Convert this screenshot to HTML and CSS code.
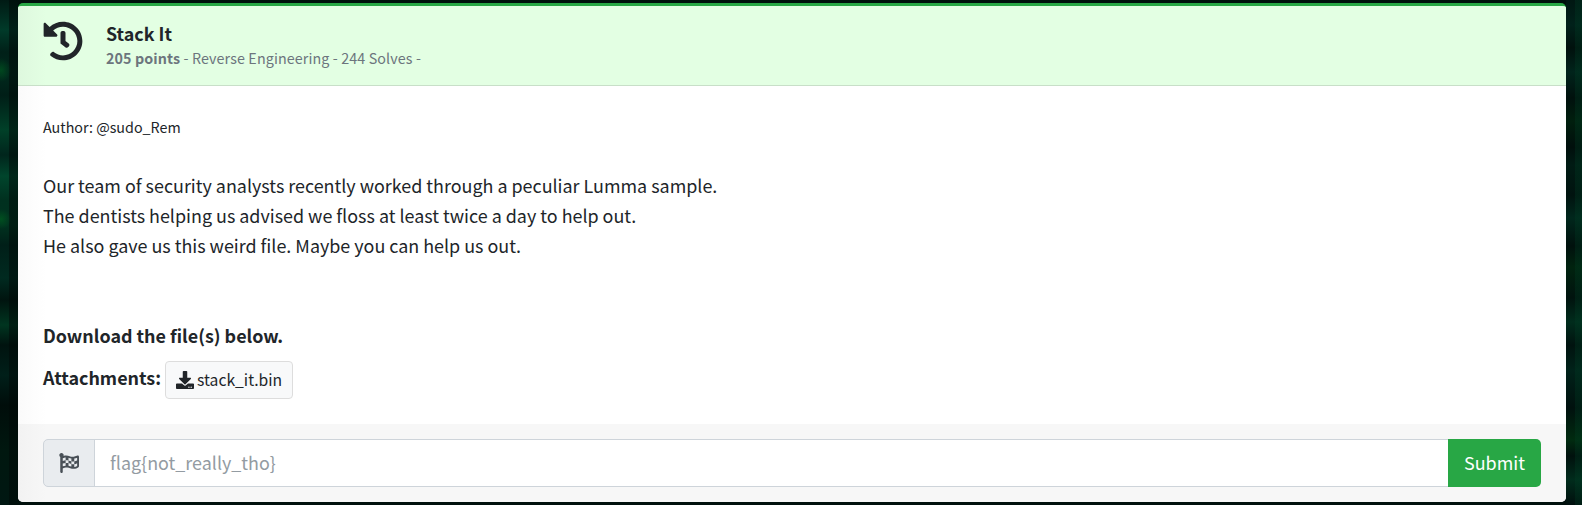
FILE: index.html
```
<!DOCTYPE html>
<html lang="en">
<head>
<meta charset="utf-8">
<title>Stack It</title>
<link rel="stylesheet" href="styles.css">
</head>
<body>
<article class="card">
  <header class="card-header">
    <svg class="history-icon" viewBox="0 0 512 512" aria-hidden="true"><path d="M504 255.531c.253 136.64-111.18 248.372-247.82 248.468-59.015.042-113.223-20.53-155.822-54.911-11.077-8.94-11.905-25.541-1.839-35.607l11.267-11.267c8.609-8.609 22.353-9.551 31.891-1.984C173.062 425.135 212.781 440 256 440c101.705 0 184-82.311 184-184 0-101.705-82.311-184-184-184-48.814 0-93.149 18.969-126.068 49.932l50.754 50.754c10.08 10.08 2.941 27.314-11.313 27.314H24c-8.837 0-16-7.163-16-16V38.627c0-14.254 17.234-21.393 27.314-11.314l49.372 49.372C129.209 34.136 189.552 8 256 8c136.81 0 247.747 110.78 248 247.531zm-180.912 78.784l9.823-12.63c8.138-10.463 6.253-25.542-4.21-33.679L288 256.349V152c0-13.255-10.745-24-24-24h-16c-13.255 0-24 10.745-24 24v135.651l65.409 50.874c10.463 8.137 25.541 6.253 33.679-4.21z"/></svg>
    <div class="heading">
      <h1 class="title">Stack It</h1>
      <p class="meta"><b>205 points</b> - Reverse Engineering - 244 Solves -</p>
    </div>
  </header>
  <div class="card-body">
    <p class="author">Author: @sudo_Rem</p>
    <p class="description">Our team of security analysts recently worked through a peculiar Lumma sample.<br>The dentists helping us advised we floss at least twice a day to help out.<br>He also gave us this weird file. Maybe you can help us out.</p>
    <p class="download">Download the file(s) below.</p>
    <div class="attachments">
      <span class="attachments-label">Attachments:</span>
      <a class="file"><svg class="file-icon" viewBox="0 0 512 512" aria-hidden="true"><path d="M216 0h80c13.3 0 24 10.7 24 24v168h87.7c17.8 0 26.7 21.5 14.1 34.1L269.7 378.3c-7.5 7.5-19.8 7.5-27.3 0L90.1 226.1c-12.6-12.6-3.7-34.1 14.1-34.1H192V24c0-13.3 10.7-24 24-24zm296 376v112c0 13.3-10.7 24-24 24H24c-13.3 0-24-10.7-24-24V376c0-13.3 10.7-24 24-24h146.7l49 49c20.1 20.1 52.5 20.1 72.6 0l49-49H488c13.3 0 24 10.7 24 24zm-124 88c0-11-9-20-20-20s-20 9-20 20 9 20 20 20 20-9 20-20zm64 0c0-11-9-20-20-20s-20 9-20 20 9 20 20 20 20-9 20-20z"/></svg><span>stack_it.bin</span></a>
    </div>
  </div>
  <footer class="card-footer">
    <span class="prefix"><svg class="flag-icon" viewBox="0 0 512 512" aria-hidden="true"><path d="M243.2 189.9V258c26.1 5.9 49.3 15.6 73.6 22.3v-68.2c-26-5.8-49.4-15.5-73.6-22.2zm223.3-123c-34.3 15.9-76.5 31.9-117 31.9C296 98.8 251.7 64 184.3 64c-25 0-47.3 4.4-68 12 2.8-7.3 4.1-15.2 3.6-23.6C118.1 24 94.8 1.2 66.3 0 34.3-1.3 8 24.3 8 56c0 19 9.5 35.8 24 45.9V488c0 13.3 10.7 24 24 24h16c13.3 0 24-10.7 24-24v-94.4c28.3-12.1 63.6-22.1 114.4-22.1 53.6 0 97.8 34.8 165.2 34.8 48.2 0 86.7-16.3 122.5-40.9 8.7-6 13.8-15.8 13.8-26.4V95.9c.1-23.3-24.2-38.8-45.4-29zM169.6 325.5c-25.8 2.7-50 8.2-73.6 16.6v-70.5c26.2-9.3 47.5-15 73.6-17.4v71.3zM464 191c-23.6 9.8-46.3 19.5-73.6 23.9V286c24.8-3.4 51.4-11.8 73.6-26v70.5c-25.1 16.1-48.5 24.7-73.6 27.1V286c-27 3.7-47.9 1.5-73.6-5.6v67.4c-23.9-7.4-47.3-16.7-73.6-21.3V258c-19.7-4.4-40.8-6.8-73.6-3.8v-70c-22.4 3.1-44.6 10.2-73.6 20.9v-70.5c33.2-12.2 50.1-19.8 73.6-22v71.6c27-3.7 48.4-1.3 73.6 5.7v-67.4c23.7 7.4 47.2 16.7 73.6 21.3v68.4c23.7 5.3 47.6 6.9 73.6 2.7V143c27-4.8 52.3-13.6 73.6-22.5z"/></svg></span>
    <input class="flag-input" type="text" placeholder="flag{not_really_tho}">
    <button class="submit">Submit</button>
  </footer>
</article>
</body>
</html>
```
FILE: styles.css
```
* { box-sizing: border-box; }
html { height: 100%; }
body {
  margin: 0;
  height: 505px;
  padding: 3px 16px 3px 18px;
  overflow: hidden;
  color: #212529;
  font: 17.92px/30px "Noto Sans CJK JP", "Noto Sans", sans-serif;
  background:
    radial-gradient(ellipse 10px 12px at 1px 70px, rgba(0, 86, 32, .7), transparent),
    radial-gradient(ellipse 10px 10px at 1px 219px, rgba(0, 92, 32, .7), transparent),
    linear-gradient(90deg, transparent 9px, rgba(0, 8, 6, .5) 9px, rgba(0, 8, 6, .5) 18px, transparent 18px) no-repeat,
    linear-gradient(#001a14, #003a29 30px, #002018 52px, #00281c 75px, #001e17 95px, #004028 130px, #00251c 155px, #00452c 176px, #00301f 200px, #00321f 225px, #001f18 245px, #002a20 278px, #00140f 300px, #003520 325px, #00130f 345px, #001f19 375px, #000d0a 405px, #00170f 450px, #001712 505px) 0 0 / 18px 505px no-repeat,
    linear-gradient(90deg, transparent 1575px, rgba(0, 65, 38, .28) 1575px) no-repeat,
    linear-gradient(#001712, #00211a 25px, #00110d 48px, #00241b 72px, #00110d 98px, #001f0e 121px, #000f0c 147px, #001b14 165px, #00130f 195px, #00271c 218px, #00110d 246px, #00230f 267px, #00130e 298px, #002c1c 322px, #00130f 345px, #002219 370px, #00110e 408px, #002b10 440px, #00110d 456px, #002c1c 480px, #000f0d 505px) 1566px 0 / 16px 505px no-repeat,
    #00100c;
}
h1, p { margin: 0; }
svg { display: block; flex: none; fill: currentColor; }
.card {
  display: flex;
  flex-direction: column;
  height: 499px;
  overflow: hidden;
  border-top: 3px solid #28a745;
  border-radius: 5px;
  background: linear-gradient(90deg, #fafafa, #fff 28px);
}
.card-header {
  display: flex;
  gap: 23px;
  height: 80px;
  padding: 15px 25px 0;
  border-bottom: 1px solid #c8dfc8;
  background: linear-gradient(90deg, #def8de, #e3ffe3 28px);
}
.history-icon { width: 40px; height: 40px; }
.heading { margin-top: -1px; }
.title { font-size: 17.9px; line-height: 26px; font-weight: 700; }
.meta { font-size: 14.3px; line-height: 24px; letter-spacing: .11px; color: #6c757d; }
.card-body { flex: 1; padding: 29px 25px 0; }
.author { font-size: 14.3px; line-height: 24px; }
.description { margin-top: 31px; }
.download { margin-top: 60px; font-weight: 700; }
.attachments { display: flex; gap: 4px; margin-top: 11px; }
.attachments-label { font-weight: 700; line-height: 32px; }
.file {
  display: flex;
  align-items: center;
  gap: 3px;
  height: 38px;
  padding: 0 10px;
  border: 1px solid #ddd;
  border-radius: 4px;
  background: #f8f9fa;
  font-size: 15.7px;
}
.file-icon { width: 18px; height: 18px; }
.card-footer {
  display: flex;
  height: 78px;
  padding: 15px 25px;
  background: linear-gradient(90deg, #f2f2f2, #f7f7f7 28px);
}
.prefix {
  display: flex;
  align-items: center;
  justify-content: center;
  width: 52px;
  border: 1px solid #ced4da;
  border-radius: 5px 0 0 5px;
  background: #e9ecef;
  color: #495057;
}
.flag-icon { width: 20px; height: 20px; }
.flag-input {
  flex: 1;
  min-width: 0;
  margin-left: -1px;
  padding: 0 15px 2px;
  border: 1px solid #ced4da;
  border-right: 0;
  background: #fff;
  font: inherit;
}
.flag-input::placeholder { color: #939ba2; }
.submit {
  width: 93px;
  padding: 0 0 2px;
  border: 0;
  border-radius: 0 5px 5px 0;
  background: #28a745;
  color: #fff;
  font: inherit;
}
```
